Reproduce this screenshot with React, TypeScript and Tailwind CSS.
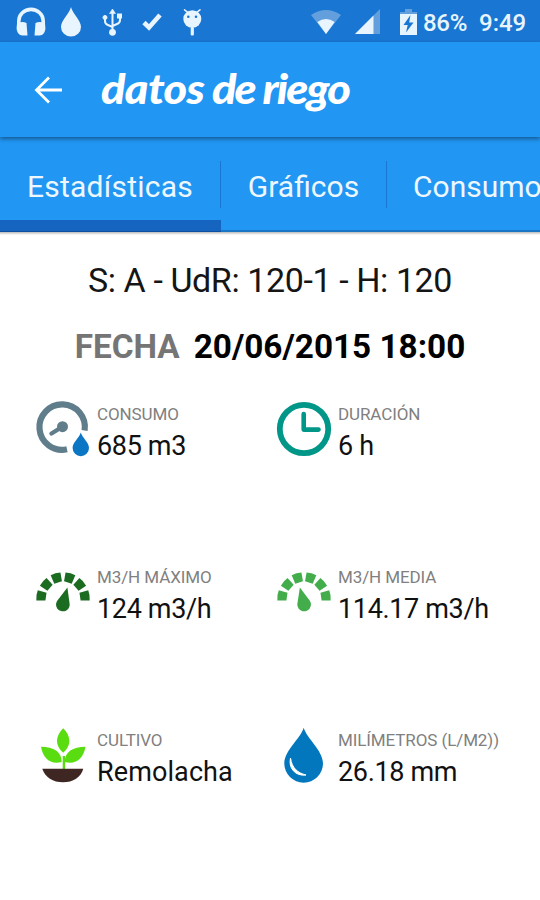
import React from 'react';

function Headphones() {
  return (
    <svg className="ml-4 h-[30px] w-[30px] shrink-0" viewBox="0 0 30 30" fill="#e8f4fe">
      <path d="M2.800 19V14a12.200 11.600 0 0 1 24.400 0V19" fill="none" stroke="#e8f4fe" strokeWidth="3.600" />
      <path d="M1 16.500q5-2.500 9.500-.5l1 12.500H6.500C3 28.500 .6 25 .6 21z" />
      <path d="M29 16.500q-5-2.500-9.500-.5l-1 12.500h5c3.500 0 5.900-3.500 5.900-7.500z" />
    </svg>
  );
}

function Usb() {
  return (
    <svg className="ml-[21px] h-[28px] w-[20px] shrink-0" viewBox="0 0 20 28" fill="#e8f4fe" stroke="#e8f4fe">
      <path d="M10.500 24V4M3 9v4q0 3 3 4l4.500 2M18 8v4q0 3-3 4l-4.500 2" fill="none" strokeWidth="2" />
      <path d="M10.500 1L13.500 5.500h-6z" strokeWidth=".6" />
      <circle cx="3" cy="9.500" r="2" />
      <rect x="15" y="5.500" width="5" height="5" stroke="none" />
      <circle cx="10.500" cy="24.300" r="3.400" stroke="none" />
    </svg>
  );
}

function Bug() {
  return (
    <svg className="ml-[20px] h-[28px] w-[20px] shrink-0" viewBox="0 0 20 28">
      <path d="M2.500 1.800l4 3M18 1.800l-4 3" stroke="#e8f4fe" strokeWidth="1.500" strokeLinecap="round" />
      <ellipse cx="10.300" cy="11" rx="9" ry="8.700" fill="#e8f4fe" />
      <rect x="8.700" y="19" width="3.200" height="8.500" rx="1" fill="#e8f4fe" />
      <circle cx="6.300" cy="8.700" r="1.300" fill="#1976d2" />
      <circle cx="14" cy="8.700" r="1.300" fill="#1976d2" />
    </svg>
  );
}

function StatusBar() {
  return (
    <div className="flex h-[42px] items-center bg-[#1976d2] pt-px text-[#e8f4fe]">
      <Headphones />
      <svg className="ml-[15px] h-[30px] w-[20px] shrink-0" viewBox="0 0 20 30" fill="#e8f4fe">
        <path d="M10 0C11.500 7 20 13 20 20a10 9.500 0 0 1-20 0C0 13 8.500 7 10 0z" />
      </svg>
      <Usb />
      <svg className="ml-[20px] h-[18px] w-[20px] shrink-0" viewBox="0 0 20 18">
        <path d="M2 9.500l5 5L18 2" fill="none" stroke="#e8f4fe" strokeWidth="4.600" />
      </svg>
      <Bug />
      <svg className="ml-auto h-[24px] w-[30px] shrink-0" viewBox="0 0 30 24">
        <path d="M0 5Q15-5 30 5L15 24z" fill="#639fdc" />
        <path d="M6.300 12Q15 6 23.700 12L15 24z" fill="#e8f4fe" />
      </svg>
      <svg className="ml-[14px] h-[25px] w-[25px] shrink-0" viewBox="0 0 25 25">
        <path d="M25 0v25H0z" fill="#639fdc" />
        <path d="M18.500 6.500V25H0z" fill="#e8f4fe" />
      </svg>
      <svg className="ml-[20px] h-[26px] w-[17px] shrink-0" viewBox="0 0 17 26">
        <path d="M5 0h7v3h5v6H0V3h5z" fill="#639fdc" />
        <path d="M0 5h17v21H0z" fill="#e8f4fe" />
        <path d="M10.500 6L3.500 16h4.200L6 23.500l7.500-10H9.200z" fill="#1976d2" />
      </svg>
      <span className="ml-[6px] w-[56px] pt-[2px] text-[24px] leading-none font-medium tracking-[-0.3px]">86%</span>
      <span className="w-[61px] pt-[2px] text-[24px] leading-none font-medium">9:49</span>
    </div>
  );
}

function Toolbar() {
  return (
    <header className="relative z-10 flex h-[95px] items-center bg-[#2196f3] text-white shadow-[0_2px_4px_rgba(0,0,0,0.4)]">
      <svg className="ml-[34px] h-[28px] w-[28px] shrink-0" viewBox="0 0 28 28" fill="none" stroke="#fff" strokeWidth="2.800">
        <path d="M15 1.500L2.500 14 15 26.500M2 14h26" />
      </svg>
      <h1 className="ml-[39px] origin-left scale-x-[1.1] pb-[3px] font-['Lato'] text-[41px] leading-none font-black tracking-[-1.7px] whitespace-nowrap italic">
        <span className="tracking-[-0.6px]">datos</span> de riego
      </h1>
    </header>
  );
}

function Tabs() {
  return (
    <nav className="relative flex h-[95px] overflow-hidden bg-[#2196f3] text-[30px] leading-none whitespace-nowrap text-[#edf7ff] shadow-[inset_0_-2px_0_#1976c5]">
      <div className="flex w-[221px] shrink-0 flex-col justify-between">
        <div className="mt-[24px] flex h-[47px] items-center justify-center border-r border-[#1976d2] pt-1 tracking-[0.25px]">Estadísticas</div>
        <div className="h-[12px] border-b border-[#0f4fa0] bg-[#1565c0]" />
      </div>
      <div className="mt-[24px] flex h-[47px] w-[166px] shrink-0 items-center justify-center border-r border-[#1976d2] pt-1">Gráficos</div>
      <div className="mt-[24px] flex h-[47px] shrink-0 items-center pt-1 pl-[26px]">Consumo</div>
    </nav>
  );
}

function MeterIcon() {
  return (
    <svg className="h-[56px] w-[56px]" viewBox="0 0 56 56">
      <path d="M32 48.300A22.700 22.700 0 1 1 49.600 29.500" fill="none" stroke="#607d8b" strokeWidth="6.200" />
      <path d="M16.500 32.500L27 26" stroke="#607d8b" strokeWidth="4.400" strokeLinecap="round" />
      <circle cx="27.500" cy="25.700" r="5.500" fill="#607d8b" />
      <path d="M45.800 31.500c2 6 8.200 10 8.200 15.500a8.200 8.200 0 0 1-16.400 0C37.600 41.500 43.800 37.500 45.800 31.500z" fill="#0b76c4" />
    </svg>
  );
}

function ClockIcon() {
  return (
    <svg className="h-[56px] w-[56px]" viewBox="0 0 56 56" fill="none" stroke="#009688">
      <circle cx="28" cy="28" r="24.200" strokeWidth="5.800" />
      <path d="M27.700 13v15.600H42.500" strokeWidth="4.600" strokeLinecap="round" strokeLinejoin="round" />
    </svg>
  );
}

const gaugeAngles = [-82, -49, -16.5, 16.5, 49, 82];

function GaugeIcon({ color, angle }: { color: string; angle: number }) {
  return (
    <svg className="h-[56px] w-[56px]" viewBox="0 0 56 56" fill={color}>
      {gaugeAngles.map((a) => (
        <path key={a} d="M22.900 8.800Q28 7.600 33.100 8.800L32 17.800H24z" transform={`rotate(${a} 28 35)`} />
      ))}
      <path d="M28 23L34.300 38a6.800 6.800 0 1 1-12.600 0z" transform={`rotate(${angle} 28 40)`} />
    </svg>
  );
}

function PlantIcon() {
  return (
    <svg className="h-[56px] w-[56px]" viewBox="0 0 56 56">
      <path d="M28.200 1.300c8 8 8.500 17 0 24.400-8.500-7.400-8-16.400 0-24.400zM6 19.700c13 0 21 5.500 20.700 15.300C15 38 8 31 6 19.700zM50.500 19.700C37.500 19.700 29.500 25.200 29.800 35c11.700 3 18.700-4 20.700-15.300z" fill="#5add10" />
      <path d="M27.700 29h2.400v14h-2.400z" fill="#5add10" />
      <path d="M7.300 41.700h41C46 50 38 55.300 28 55.300S10 50 7.300 41.700z" fill="#3e2723" />
    </svg>
  );
}

function DropIcon() {
  return (
    <svg className="h-[56px] w-[56px]" viewBox="0 0 56 56">
      <path d="M27.700 .8C30.700 11.500 47 23.500 47 36.500a19.350 19.200 0 0 1-38.700 0C8.300 23.500 24.700 11.500 27.700 .8z" fill="#0277bd" />
      <path d="M14.500 31C12 41 19.500 49.500 30 48 22 46 16 41.500 14.500 31z" fill="#fff" stroke="#fff" strokeWidth="1" strokeLinejoin="round" />
    </svg>
  );
}

function Stat({ icon, label, children }: { icon: React.ReactNode; label: string; children: React.ReactNode }) {
  return (
    <div className="flex h-[163px] items-start whitespace-nowrap">
      <div className="mr-[6px] shrink-0 pt-px">{icon}</div>
      <div className="pt-[4px]">
        <div className="text-[17px] leading-[20px] tracking-[-0.1px] text-[#808080]">{label}</div>
        <div className="mt-[5px] text-[27px] leading-[34px] tracking-[-0.35px] text-[#111]">{children}</div>
      </div>
    </div>
  );
}

export default function App() {
  return (
    <div className="h-[900px] w-[540px] overflow-hidden bg-white font-['Roboto',sans-serif]">
      <StatusBar />
      <Toolbar />
      <Tabs />
      <div className="h-[3px] bg-gradient-to-b from-[#bbb] to-white" />
      <main>
        <p className="mt-[25px] text-center text-[34px] leading-[40px] tracking-[-0.4px] text-[#151515]">S: A - UdR: 120-1 - H: 120</p>
        <p className="mt-[27px] text-center text-[33.3px] leading-[40px] font-bold text-black">
          <span className="mr-[14px] text-[#757575]">FECHA</span>20/06/2015 18:00
        </p>
        <div className="mt-[33px] grid grid-cols-[241px_1fr] pl-[35px]">
          <Stat icon={<MeterIcon />} label="CONSUMO">685 m3</Stat>
          <Stat icon={<ClockIcon />} label="DURACIÓN">6 h</Stat>
          <Stat icon={<GaugeIcon color="#1b6b20" angle={15} />} label="M3/H MÁXIMO">124 m3/h</Stat>
          <Stat icon={<GaugeIcon color="#43ad4b" angle={-14} />} label="M3/H MEDIA">114.17 m3/h</Stat>
          <Stat icon={<PlantIcon />} label="CULTIVO"><span className="tracking-[0.1px]">Remolacha</span></Stat>
          <Stat icon={<DropIcon />} label="MILÍMETROS (L/M2))">26.18 mm</Stat>
        </div>
      </main>
    </div>
  );
}
